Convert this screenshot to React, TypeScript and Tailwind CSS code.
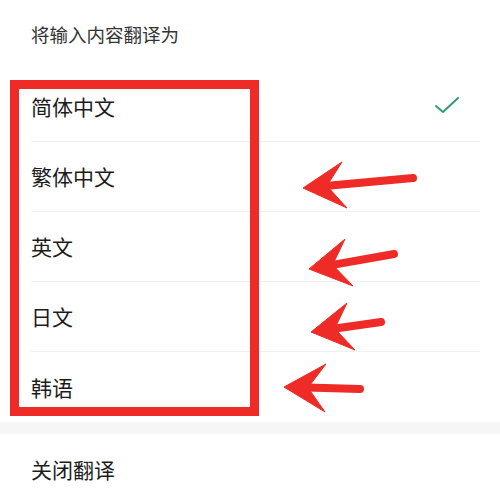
const languages = ["简体中文", "繁体中文", "英文", "日文", "韩语"];

type Pt = [number, number];

// annotation arrows: tip, upper barb, lower barb, tail end
const arrows: { tip: Pt; up: Pt; low: Pt; tail: Pt }[] = [
  { tip: [303, 188], up: [342, 162], low: [347, 208], tail: [413, 178] },
  { tip: [309, 269], up: [345, 239], low: [353, 286], tail: [394, 254] },
  { tip: [311, 332], up: [347, 303], low: [355, 350], tail: [381, 322] },
  { tip: [284, 387], up: [326, 364], low: [325, 412], tail: [360, 389] },
];

const Arrow = ({ tip, up, low, tail }: { tip: Pt; up: Pt; low: Pt; tail: Pt }) => {
  const dx = tail[0] - tip[0];
  const dy = tail[1] - tip[1];
  const len = Math.hypot(dx, dy);
  const ux = dx / len;
  const uy = dy / len;
  const notch: Pt = [tip[0] + ux * 24, tip[1] + uy * 24];
  const start: Pt = [tip[0] + ux * 14, tip[1] + uy * 14];
  return (
    <g fill="#ef2b28" stroke="#ef2b28">
      <polygon points={`${tip.join(",")} ${up.join(",")} ${notch.join(",")} ${low.join(",")}`} strokeWidth={1} strokeLinejoin="round" />
      <line x1={start[0]} y1={start[1]} x2={tail[0]} y2={tail[1]} strokeWidth={8} strokeLinecap="round" />
    </g>
  );
};

const Check = () => (
  <svg width="26" height="18" viewBox="0 0 26 18" fill="none">
    <path d="M2 10 L9 16 L24 2" stroke="#2e9e76" strokeWidth="2" strokeLinecap="round" strokeLinejoin="round" />
  </svg>
);

export default function App() {
  return (
    <div
      className="relative w-[500px] h-[502px] overflow-hidden bg-white"
      style={{ fontFamily: '"Noto Sans CJK SC", "Noto Sans", sans-serif' }}
    >
      <div className="h-[72px] pl-[31px] pt-[22px] text-[18.5px] leading-[24px] text-[#333333]">将输入内容翻译为</div>

      <div className="flex flex-col">
        {languages.map((name, i) => (
          <div key={name} className="pl-[31px] pr-[20px]">
            <div
              className={
                "h-[70px] flex items-center justify-between " +
                (i < languages.length - 1 ? "border-b border-[#f1f1f1]" : "")
              }
            >
              <span className="text-[21px] leading-none text-[#1c1c1c]">{name}</span>
              {i === 0 && (
                <span className="mr-[20px] mt-[-4px]">
                  <Check />
                </span>
              )}
            </div>
          </div>
        ))}
      </div>

      <div className="h-[12px] bg-[#f6f6f6]" />

      <div className="h-[70px] flex items-center pl-[31px] text-[21px] leading-none text-[#1c1c1c]">关闭翻译</div>

      {/* annotation box */}
      <div className="absolute left-[10px] top-[80px] w-[249px] h-[336px] border-[9px] border-[#ef2b28]" />

      <svg className="absolute left-0 top-0 pointer-events-none" width="500" height="502" viewBox="0 0 500 502">
        {arrows.map((a, i) => (
          <Arrow key={i} {...a} />
        ))}
      </svg>
    </div>
  );
}
